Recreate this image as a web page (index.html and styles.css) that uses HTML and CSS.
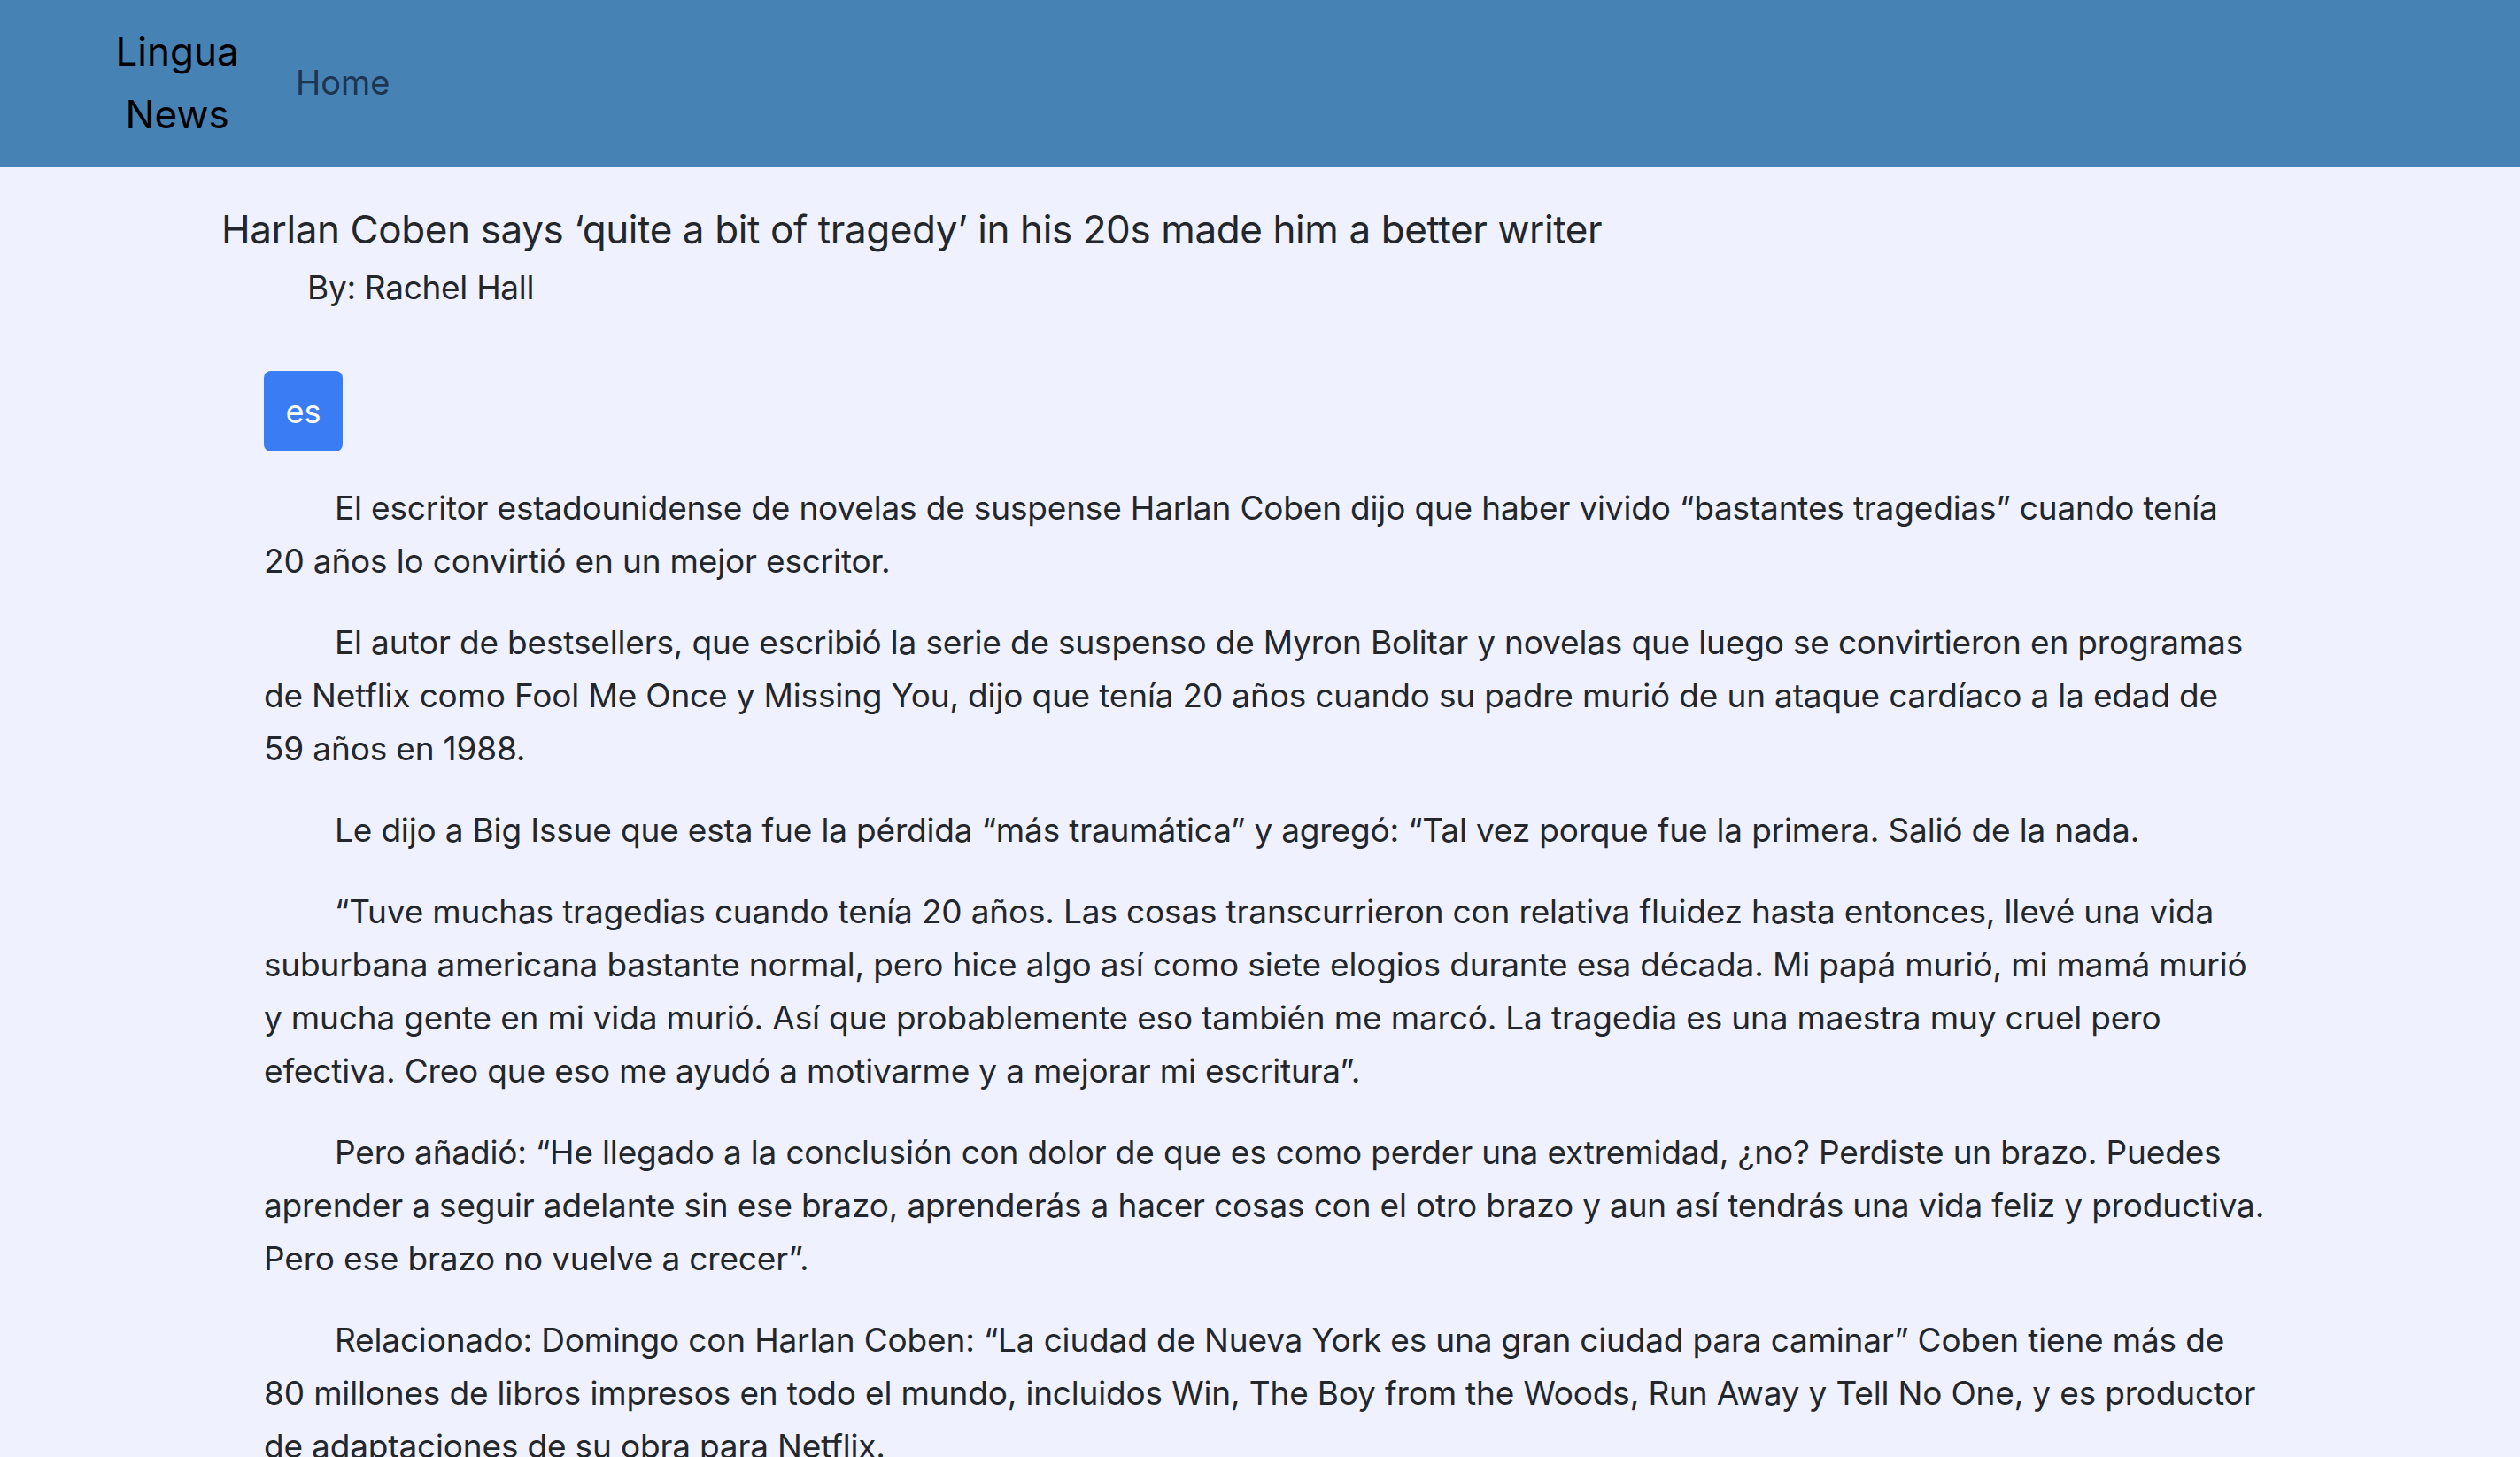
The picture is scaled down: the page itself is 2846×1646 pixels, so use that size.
FILE: index.html
```html
<!DOCTYPE html>
<html lang="es">
<head>
<meta charset="utf-8">
<title>Lingua News</title>
<link rel="stylesheet" href="styles.css">
</head>
<body>
<header class="topbar">
  <a class="logo" href="#">Lingua News</a>
  <nav class="nav"><a class="nav-link" href="#">Home</a></nav>
</header>
<main class="page">
  <h1 class="title">Harlan Coben says ‘quite a bit of tragedy’ in his 20s made him a better writer</h1>
  <p class="byline">By: Rachel Hall</p>
  <article class="article">
    <div class="lang-row"><button class="lang-btn">es</button></div>
    <p class="para">El escritor estadounidense de novelas de suspense Harlan Coben dijo que haber vivido “bastantes tragedias” cuando tenía 20 años lo convirtió en un mejor escritor.</p>
    <p class="para">El autor de bestsellers, que escribió la serie de suspenso de Myron Bolitar y novelas que luego se convirtieron en programas de Netflix como Fool Me Once y Missing You, dijo que tenía 20 años cuando su padre murió de un ataque cardíaco a la edad de 59 años en 1988.</p>
    <p class="para">Le dijo a Big Issue que esta fue la pérdida “más traumática” y agregó: “Tal vez porque fue la primera. Salió de la nada.</p>
    <p class="para">“Tuve muchas tragedias cuando tenía 20 años. Las cosas transcurrieron con relativa fluidez hasta entonces, llevé una vida suburbana americana bastante normal, pero hice algo así como siete elogios durante esa década. Mi papá murió, mi mamá murió y mucha gente en mi vida murió. Así que probablemente eso también me marcó. La tragedia es una maestra muy cruel pero efectiva. Creo que eso me ayudó a motivarme y a mejorar mi escritura”.</p>
    <p class="para">Pero añadió: “He llegado a la conclusión con dolor de que es como perder una extremidad, ¿no? Perdiste un brazo. Puedes aprender a seguir adelante sin ese brazo, aprenderás a hacer cosas con el otro brazo y aun así tendrás una vida feliz y productiva. Pero ese brazo no vuelve a crecer”.</p>
    <p class="para">Relacionado: Domingo con Harlan Coben: “La ciudad de Nueva York es una gran ciudad para caminar” Coben tiene más de 80 millones de libros impresos en todo el mundo, incluidos Win, The Boy from the Woods, Run Away y Tell No One, y es productor de adaptaciones de su obra para Netflix.</p>
  </article>
</main>
</body>
</html>
```
FILE: styles.css
```css
* { box-sizing: border-box; }
html, body {
  margin: 0;
  padding: 0;
}
body {
  background: #eff2fe;
  color: #23262b;
  font-family: Inter, "Noto Sans", "Liberation Sans", sans-serif;
}
.topbar {
  display: flex;
  align-items: center;
  height: 189px;
  background: #4682b4;
  padding-left: 128px;
  padding-bottom: 2px;
}
.logo {
  display: block;
  width: 144px;
  text-align: center;
  font-size: 44px;
  line-height: 71px;
  color: #000;
  text-decoration: none;
}
.nav {
  margin-left: 62px;
  margin-bottom: 2px;
}
.nav-link {
  font-size: 38px;
  color: #1d3550;
  text-decoration: none;
}
.page {
  padding: 42px 288px 0 250px;
}
.title {
  margin: 0;
  font-size: 44px;
  font-weight: 400;
  line-height: 56px;
  letter-spacing: -0.4px;
}
.byline {
  margin: 8px 0 0 97px;
  font-size: 37px;
  line-height: 60px;
  letter-spacing: -0.3px;
}
.article {
  padding-left: 48px;
}
.lang-row {
  display: flex;
  margin-top: 64px;
  margin-bottom: 34px;
}
.lang-btn {
  width: 89px;
  height: 91px;
  border: none;
  border-radius: 8px;
  background: #3a7cf4;
  color: #fff;
  font-family: inherit;
  font-size: 36px;
  padding: 0;
}
.para {
  margin: 0 0 32px;
  font-size: 37px;
  line-height: 60px;
  text-indent: 80px;
  letter-spacing: -0.17px;
}
```
